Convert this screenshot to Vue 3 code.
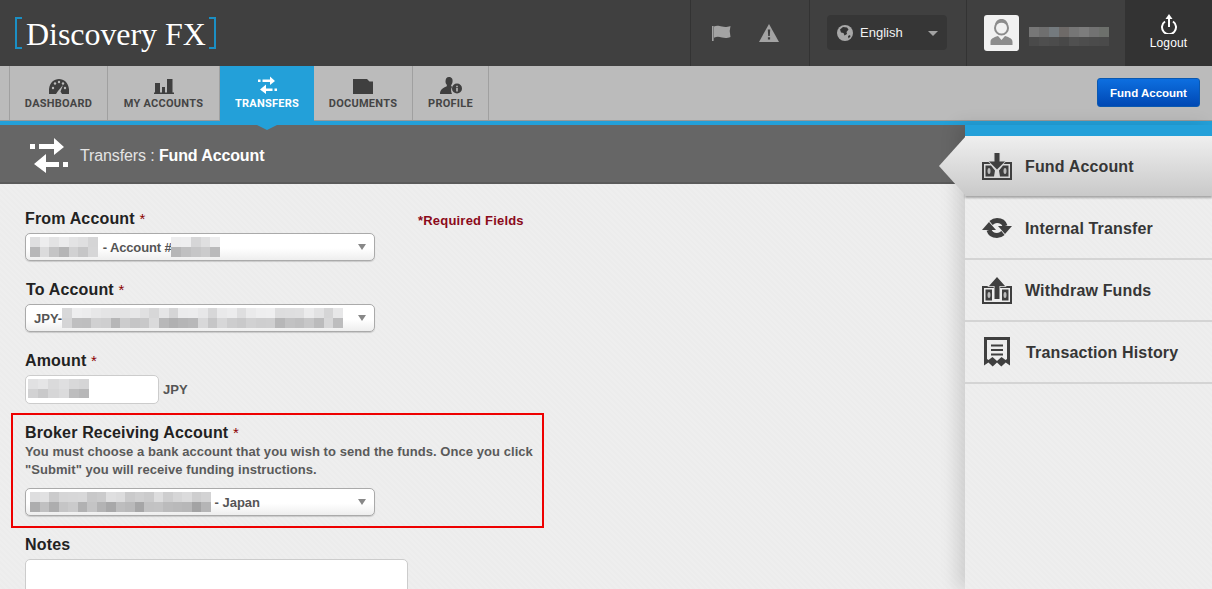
<script setup>
function mosaic(cols, rows, seed, dark = 0) {
  const out = []
  let s = seed
  for (let i = 0; i < cols * rows; i++) {
    s = (s * 9301 + 49297) % 233280
    const r = s / 233280
    const v = (i < cols ? 212 + r * 28 : 176 + r * 44) - dark
    const g = Math.round(v)
    out.push(`rgb(${g},${g},${g + 1})`)
  }
  return out
}
const tabs = [
  { label: 'DASHBOARD', cls: 'w-dash', icon: 'dash' },
  { label: 'MY ACCOUNTS', cls: 'w-acc', icon: 'bars' },
  { label: 'TRANSFERS', cls: 'w-tr', icon: 'tr', active: true },
  { label: 'DOCUMENTS', cls: 'w-doc', icon: 'doc' },
  { label: 'PROFILE', cls: 'w-pro', icon: 'pro' }
]
const userBlur = ['#777', '#6f6f6f', '#747a7e', '#6e6a68', '#767676', '#7c7c7c', '#727272', '#6d706c', '#4a4a4a', '#4e4e4e', '#4c4c4c', '#484848', '#505050', '#4d4d4d', '#4b4b4b', '#4a4a4a']
const from1 = mosaic(7, 2, 5)
const from2 = mosaic(5, 2, 17)
const toBlur = mosaic(29, 2, 23)
const amtBlur = mosaic(6, 2, 31)
const brokerBlur = mosaic(19, 2, 41, 14)
const grid = (n, w = 9.7) => ({ gridTemplateColumns: `repeat(${n}, ${w}px)` })
</script>

<template>
  <div class="page">
    <header class="top">
      <div class="logo"><span class="br br-l"></span><span class="logo-text">Discovery FX</span><span class="br br-r"></span></div>
      <div class="alerts">
        <svg viewBox="0 0 20 16" width="20" height="16"><path fill="#a3a3a3" d="M0 1h1.600v15H0zM2 1.600c3-1.600 5-.6 8 0s5 .5 8.500-.6l-.8 5 .8 6c-3.500 1.300-5.500 1.200-8.500.5s-5-1.200-8 .3z"/></svg>
        <svg viewBox="0 0 20 18" width="20" height="18"><path fill="#a3a3a3" d="M10 0l10 18H0z"/><path fill="#3f3f3f" d="M8.800 5.500h2.400l-.4 6.500H9.200zM8.900 13.200h2.200v2.300H8.900z"/></svg>
      </div>
      <div class="lang-wrap">
        <div class="lang">
          <svg viewBox="0 0 16 16" width="16" height="16"><circle cx="8" cy="8" r="8" fill="#a8a8a8"/><path fill="#333" d="M3 4.500l3-2.500 4 .5 1.500 2-2 2.500.5 2-2.500 1.500-1-2.500-2.500-.5zM11 11l2-1 .5 1.500-2 2z"/></svg>
          <span class="lang-name">English</span>
          <span class="caret"></span>
        </div>
      </div>
      <div class="user">
        <div class="avatar">
          <svg viewBox="0 0 35 36" width="35" height="36"><circle cx="17.500" cy="13" r="6.500" fill="none" stroke="#8c8c8c" stroke-width="2"/><path fill="#8c8c8c" d="M11 9.500c1-4 3.500-5.500 6.500-5.500s5.500 1.500 6.500 5.500c-3-1.500-4-2-6.500-2s-3.500.5-6.500 2zM6.500 30v-3c0-3.500 3-4.500 7.500-6l3.500 4 3.500-4c4.500 1.500 7.500 2.500 7.500 6v3z"/></svg>
        </div>
        <div class="mosaic user-blur" :style="grid(8, 10)"><i v-for="(c, i) in userBlur" :key="i" :style="{ background: c }"></i></div>
      </div>
      <div class="logout">
        <svg viewBox="0 0 18 20" width="18" height="20"><path fill="none" stroke="#fff" stroke-width="2" d="M5 7.500a7 7 0 1 0 8 0"/><path fill="#fff" d="M8 5h2v8H8z"/><path fill="#fff" d="M9 0l3.500 5h-7z"/></svg>
        <span>Logout</span>
      </div>
    </header>

    <nav class="nav">
      <div class="tabs">
        <div v-for="t in tabs" :key="t.label" class="tab" :class="[t.cls, { active: t.active }]">
          <svg v-if="t.icon === 'dash'" viewBox="0 0 20 15" width="20" height="15"><path fill="#3f3f3f" d="M0 15C-1 5 4 0 10 0s11 5 10 15h-7l-1.500-2.500L14 6l-5 6-2 3z"/><g fill="#bbb"><circle cx="4" cy="9" r="1.200"/><circle cx="6" cy="4.500" r="1.200"/><circle cx="10" cy="3" r="1.200"/><circle cx="14" cy="4.500" r="1.200"/><circle cx="16" cy="9" r="1.200"/></g></svg>
          <svg v-else-if="t.icon === 'bars'" viewBox="0 0 20 15" width="20" height="15"><path fill="#3f3f3f" d="M1 4h5v10H1zM8 8h3v6H8zM13 0h5.500v14H13zM0 13.500h20V15H0z"/></svg>
          <svg v-else-if="t.icon === 'tr'" viewBox="0 0 38 38" width="19" height="19"><use href="#arrows"/></svg>
          <svg v-else-if="t.icon === 'doc'" viewBox="0 0 20 15" width="20" height="15"><path fill="#3f3f3f" d="M0 0h14l2.500 2.500H20V15H0z"/></svg>
          <svg v-else viewBox="0 0 22 17" width="22" height="17"><path fill="#3f3f3f" d="M9 0c3 0 4 2.500 3.500 5-.2 1.500-1 2.500-1.500 3.500l1 1.500c-1.500 2-1 5 0 7H0c0-4 2.500-6 6.500-7.500l.5-1.500C6 7 5.500 6 5.500 4.500 5.500 2 6.500 0 9 0z"/><circle cx="17" cy="11.500" r="5" fill="#3f3f3f"/><path fill="#bbb" d="M16.200 8.800h1.600v1.400h-1.600zM16.200 11h1.600v3.500h-1.600z"/></svg>
          <span>{{ t.label }}</span>
        </div>
      </div>
      <button class="fund-btn">Fund Account</button>
    </nav>

    <svg class="defs" width="0" height="0">
      <symbol id="arrows" viewBox="0 0 38 38">
        <path fill="#fff" d="M0 7h5v5H0zM9 7h15V1l10 9-10 8v-6H9zM33 25h5v5h-5zM29 25H16v-8L4 27l12 9v-6h13z"/>
      </symbol>
    </svg>

    <div class="main">
      <section class="content">
        <div class="title-bar">
          <svg viewBox="0 0 38 38" width="38" height="38"><use href="#arrows"/></svg>
          <h1>Transfers : <b>Fund Account</b></h1>
        </div>
        <form class="form">
          <div class="row">
            <div class="field">
              <label>From Account <em>*</em></label>
              <div class="select">
                <div class="mosaic" :style="grid(7)"><i v-for="(c, i) in from1" :key="i" :style="{ background: c }"></i></div>
                <span class="sel-text gap-l">- Account #</span>
                <div class="mosaic" :style="grid(5)"><i v-for="(c, i) in from2" :key="i" :style="{ background: c }"></i></div>
                <span class="arrow"></span>
              </div>
            </div>
            <p class="required">*Required Fields</p>
          </div>
          <div class="field spaced">
            <label class="nudge">To Account <em>*</em></label>
            <div class="select to">
              <span class="sel-text">JPY-</span>
              <div class="mosaic" :style="grid(29)"><i v-for="(c, i) in toBlur" :key="i" :style="{ background: c }"></i></div>
              <span class="arrow"></span>
            </div>
          </div>
          <div class="field spaced">
            <label>Amount <em>*</em></label>
            <div class="amount-row">
              <div class="input"><div class="mosaic" :style="grid(6, 10.200)"><i v-for="(c, i) in amtBlur" :key="i" :style="{ background: c }"></i></div></div>
              <span class="sel-text">JPY</span>
            </div>
          </div>
          <div class="redbox">
            <label>Broker Receiving Account <em>*</em></label>
            <p class="help">You must choose a bank account that you wish to send the funds. Once you click "Submit" you will receive funding instructions.</p>
            <div class="select broker">
              <div class="mosaic" :style="grid(19, 9.500)"><i v-for="(c, i) in brokerBlur" :key="i" :style="{ background: c }"></i></div>
              <span class="sel-text gap-s">- Japan</span>
              <span class="arrow"></span>
            </div>
          </div>
          <div class="field notes">
            <label>Notes</label>
            <div class="textarea"></div>
          </div>
        </form>
      </section>

      <aside class="side">
        <div class="side-top"></div>
        <div class="side-item current">
          <svg viewBox="0 0 30 27" width="30" height="27">
            <path fill="#3f3f3f" fill-rule="evenodd" d="M0 9h30v18H0zM2 11v14h26V11z"/>
            <path fill="#3f3f3f" d="M3.500 12.500H9l4 5-1 6H3.500zM26.500 12.500H21l-4 5 1 6h8.500z"/>
            <ellipse cx="7" cy="18" rx="1.500" ry="3" fill="#bbb"/><ellipse cx="23" cy="18" rx="1.500" ry="3" fill="#bbb"/>
            <path fill="#3f3f3f" stroke="#d8d8d8" stroke-width="1.500" paint-order="stroke" d="M12.500 0h5v8.500H23L15 16.500 7 8.500h5.500z"/>
          </svg>
          <span>Fund Account</span>
        </div>
        <div class="side-item">
          <svg viewBox="0 0 30 20" width="30" height="20">
            <g fill="none" stroke="#3f3f3f" stroke-width="5"><path d="M9 5C11 3.300 13 2.500 15 2.500C19 2.500 22 4.500 23 8"/><path d="M21 15C19 16.700 17 17.500 15 17.500C11 17.500 8 15.500 7 12"/></g>
            <path fill="#3f3f3f" d="M16 8h14l-7 8zM0 12h14L7 4z"/>
          </svg>
          <span>Internal Transfer</span>
        </div>
        <div class="side-item">
          <svg viewBox="0 0 30 27" width="30" height="27">
            <path fill="#3f3f3f" fill-rule="evenodd" d="M0 9h30v18H0zM2 11v14h26V11z"/>
            <path fill="#3f3f3f" d="M3.500 12.500H10v11H3.500zM26.500 12.500H20v11h6.500z"/>
            <ellipse cx="7" cy="18" rx="1.500" ry="3" fill="#bbb"/><ellipse cx="23" cy="18" rx="1.500" ry="3" fill="#bbb"/>
            <path fill="#3f3f3f" stroke="#eee" stroke-width="1.500" paint-order="stroke" d="M15 0l8 9h-5.500v13h-5V9H7z"/>
          </svg>
          <span>Withdraw Funds</span>
        </div>
        <div class="side-item hist">
          <svg viewBox="0 0 26 30" width="26" height="30"><path fill="#3f3f3f" fill-rule="evenodd" d="M0 0h26v28.500l-4.300-3-4.400 4-4.300-4-4.300 4-4.300-4L0 28.500zM3 3v19l1.500 1 4-3 4.500 4 4.500-4 4 3 1.500-1V3z"/><path fill="#3f3f3f" d="M7 7.500h12v2H7zM7 12h12v2H7zM7 16.500h12v2H7z"/></svg>
          <span>Transaction History</span>
        </div>
      </aside>
    </div>
  </div>
</template>

<style scoped>
.page { width: 1212px; height: 589px; overflow: hidden; font-family: "Liberation Sans", Arial, sans-serif; display: flex; flex-direction: column; background: #eee; }
.defs { position: absolute; }

.top { height: 66px; flex: none; display: flex; background: #404040; }
.logo { width: 691px; flex: none; display: flex; align-items: center; padding-left: 15px; box-sizing: border-box; border-right: 1px solid #333; }
.logo-text { font-family: "Liberation Serif", serif; font-size: 32px; color: #fff; margin: 2px 3px 0 4px; line-height: 34px; letter-spacing: -.05px; }
.br { width: 7px; height: 32px; box-sizing: border-box; border: 2px solid #1b8fc4; }
.br-l { border-right: 0; }
.br-r { border-left: 0; }
.alerts { width: 119px; flex: none; box-sizing: border-box; border-right: 1px solid #333; display: flex; align-items: center; padding-left: 21px; gap: 27px; }
.lang-wrap { width: 157px; flex: none; box-sizing: border-box; border-right: 1px solid #333; padding: 15px 0 0 17px; }
.lang { width: 120px; height: 35px; box-sizing: border-box; background: #363636; border-radius: 4px; display: flex; align-items: center; padding: 0 9px 0 10px; color: #f2f2f2; font-size: 13px; }
.lang-name { margin-left: 7px; }
.caret { margin-left: auto; margin-top: 2px; border: 5px solid transparent; border-top: 5px solid #a3a3a3; border-bottom: 0; }
.user { width: 158px; flex: none; box-sizing: border-box; display: flex; padding: 15px 0 0 17px; gap: 10px; }
.avatar { width: 35px; height: 36px; background: #f1f1f1; border-radius: 3px; }
.user-blur { margin-top: 12px; grid-auto-rows: 10px; }
.logout { flex: 1; background: #333; display: flex; flex-direction: column; align-items: center; padding-top: 14px; box-sizing: border-box; color: #fff; font-size: 12px; gap: 2px; letter-spacing: .15px; }

.nav { height: 55px; flex: none; box-sizing: border-box; background: #bbb; border-bottom: 1px solid #999; display: flex; align-items: flex-start; justify-content: space-between; padding-left: 9px; }
.tabs { display: flex; height: 54px; border-left: 1px solid #a0a0a0; }
.tab { box-sizing: border-box; height: 54px; border-right: 1px solid #a0a0a0; display: flex; flex-direction: column; align-items: center; justify-content: flex-end; padding-bottom: 9px; gap: 3px; color: #454545; font: 700 11px/14px Roboto, "Liberation Sans", sans-serif; letter-spacing: .25px; position: relative; }
.w-dash { width: 98px; }
.w-acc { width: 112px; }
.w-tr { width: 94px; }
.w-doc { width: 99px; }
.w-pro { width: 76px; }
.tab.active { background: #23a0d9; color: #fff; height: 55px; margin-bottom: -1px; padding-bottom: 10px; border-right: 0; }
.tab.active svg { margin-bottom: -1px; }
.tab.active::after { content: ""; position: absolute; left: 50%; bottom: -9px; margin-left: -10px; border: 10px solid transparent; border-top: 5px solid #23a0d9; border-bottom: 0; z-index: 3; }
.fund-btn { margin: 12px 12px 0 0; width: 103px; height: 29px; box-sizing: border-box; border: 1px solid #0a58b0; border-radius: 3px; background: linear-gradient(#0d6fe0, #0048b4); color: #fff; font: 700 11.5px "Liberation Sans", sans-serif; padding: 0; }

.main { flex: 1; display: flex; min-height: 0; border-top: 4px solid #23a0d9; }
.content { flex: 1; min-width: 0; background-color: #eee; background-image: repeating-linear-gradient(45deg, #eee 0 2px, #ececec 2px 4px); }
.title-bar { height: 59px; box-sizing: border-box; background: #666; border-bottom: 2px solid #5a5a5a; display: flex; align-items: center; padding: 4px 0 0 30px; color: #fff; }
h1 { margin: 0 0 0 12px; font-size: 16px; font-weight: 400; color: #e4e4e4; letter-spacing: -.12px; }
h1 b { color: #fff; }

.form { padding: 24px 0 0 25px; }
.row { display: flex; align-items: flex-start; gap: 43px; }
.field { width: 350px; flex: none; }
.spaced { margin-top: 18px; }
label { display: block; height: 20px; font-size: 16px; line-height: 22px; font-weight: 700; color: #222; margin-bottom: 5px; letter-spacing: .16px; }
label em { color: #8b0000; font-style: normal; font-weight: 400; font-size: 15px; }
.nudge { padding-left: 1px; }
.required { margin: 5px 0 0; color: #8b0a1a; font-size: 13px; font-weight: 700; letter-spacing: .2px; }
.select { position: relative; box-sizing: border-box; width: 350px; height: 28px; border: 1px solid #aaa; border-radius: 5px; background: linear-gradient(#fff 55%, #eee); box-shadow: 0 1px 1px rgba(0,0,0,.15); display: flex; align-items: center; padding-left: 4px; }
.sel-text { font-size: 13px; font-weight: 700; color: #555; }
.gap-l { margin: 0 0 0 5px; letter-spacing: -.15px; }
.gap-s { margin-left: 4px; }
.to { padding-left: 8px; }
.arrow { position: absolute; right: 8px; top: 10px; border: 4px solid transparent; border-top: 6px solid #888; border-bottom: 0; }
.mosaic { display: grid; grid-auto-rows: 9.7px; flex: none; }
.mosaic i { display: block; }
.amount-row { display: flex; align-items: center; gap: 4px; }
.input { width: 134px; height: 29px; box-sizing: border-box; background: #fff; border: 1px solid #ccc; border-radius: 5px; padding: 3px 0 0 2px; }
.redbox { box-sizing: border-box; margin: 9px 0 0 -14px; width: 533px; height: 115px; border: 2px solid #ee0000; padding: 7px 0 0 12px; }
.redbox label { margin-bottom: 0; }
.help { margin: 0 0 -1px; font-size: 13px; line-height: 18px; font-weight: 700; color: #5a5a5a; letter-spacing: .06px; width: 515px; padding-top: 1px; }
.broker { margin-top: 10px; }
.notes { margin-top: 6px; width: 383px; }
.textarea { height: 60px; box-sizing: border-box; background: #fff; border: 1px solid #ccc; border-radius: 5px; }

.side { width: 247px; flex: none; position: relative; z-index: 2; background-color: #eee; background-image: repeating-linear-gradient(45deg, #eee 0 2px, #ececec 2px 4px); box-shadow: -8px 0 16px rgba(0,0,0,.13); }
.side-top { height: 11px; background: #23a0d9; }
.side-item { height: 62px; box-sizing: border-box; border-bottom: 2px solid #d4d4d4; display: flex; align-items: center; padding-left: 17px; gap: 13px; font-size: 16px; font-weight: 700; color: #363636; letter-spacing: .15px; }
.side-item svg { flex: none; }
.side-item span { padding-top: 2px; }
.hist { gap: 16px; padding-left: 19px; }
.current { position: relative; height: 60px; margin-bottom: 2px; border-bottom: 0; background: linear-gradient(#efefef, #c9c9c9); box-shadow: 0 2px 2px rgba(0,0,0,.3); }
.current::before { content: ""; position: absolute; left: -26px; top: 0; width: 27px; height: 60px; background: linear-gradient(#efefef, #c9c9c9); clip-path: polygon(100% 0, 0 50%, 100% 100%); }
</style>

<style>
html, body { margin: 0; overflow: hidden; }
</style>
